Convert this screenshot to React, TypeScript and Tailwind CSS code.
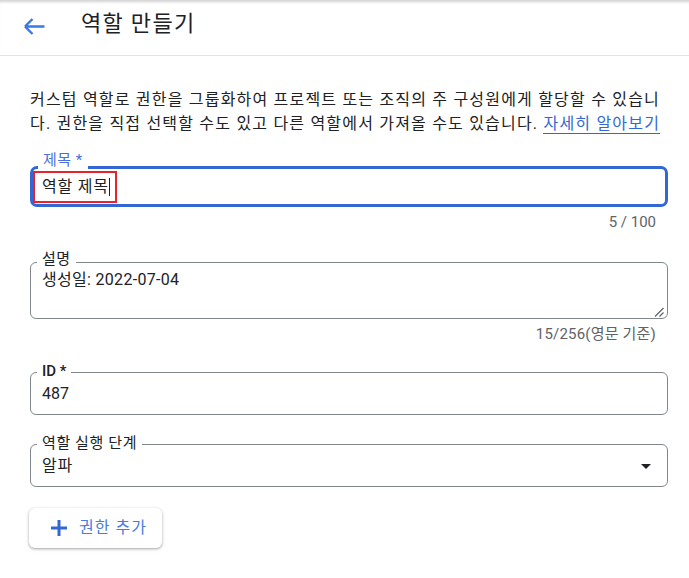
export default function App() {
  return (
    <div className="w-[689px] h-[578px] overflow-hidden bg-white text-[#202124] font-[Roboto,'Noto_Sans_CJK_KR',sans-serif]">
      <header className="h-[56px] flex items-start border-b border-[#e3e3e3] shadow-[inset_0_4px_3px_-2px_rgba(0,0,0,0.18)]">
        <svg className="ml-[22px] mt-[14px]" width="24" height="24" viewBox="0 0 24 24" fill="none" stroke="#3b78e7" strokeWidth="2.4" strokeLinecap="butt" strokeLinejoin="miter">
          <path d="M3 12.5H22.5M3 12.5L10.5 5M3 12.5L10.5 20" />
        </svg>
        <h1 className="ml-[35px] mt-[10px] text-[22px] leading-[28px] font-normal tracking-[1.3px]">역할 만들기</h1>
      </header>

      <main className="pl-[30px] pr-[21px]">
        <p className="mt-[32px] text-[16px] leading-[24px] tracking-[1.2px] whitespace-nowrap">
          커스텀 역할로 권한을 그룹화하여 프로젝트 또는 조직의 주 구성원에게 할당할 수 있습니
          <br />
          다. 권한을 직접 선택할 수도 있고 다른 역할에서 가져올 수도 있습니다.{" "}
          <a className="text-[#3367d6] border-b border-[#3367d6]">자세히 알아보기</a>
        </p>

        <div className="relative mt-[30px] h-[41px] border-[3px] border-[#3367d6] rounded-[7px] flex items-center">
          <span className="absolute left-[5px] -top-[18px] px-[5px] bg-white text-[15px] leading-[18px] tracking-[0.5px] text-[#4a6fdc]">제목 *</span>
          <div className="h-[32px] w-[84px] border-2 border-[#e8232a] flex items-center pl-[7px] text-[16px] leading-[20px] tracking-[0.8px]">
            역할 제목
            <span className="inline-block w-px h-[18px] bg-[#202124]" />
          </div>
        </div>
        <div className="mt-[6px] pr-[12px] text-right text-[15px] leading-[18px] text-[#5f6368]">5 / 100</div>

        <div className="relative mt-[31px] h-[57px] border border-[#80868b] rounded-[6px] pl-[11px] pt-[7px]">
          <span className="absolute left-[6px] -top-[13px] px-[5px] bg-white text-[15px] leading-[18px] tracking-[0.5px]">설명</span>
          <div className="text-[16px] leading-[20px] tracking-[0.3px]">생성일: 2022-07-04</div>
          <svg className="absolute right-[3px] bottom-[1px]" width="10" height="10" viewBox="0 0 10 10" stroke="#5f6368" strokeWidth="1.2">
            <path d="M9.5 1L1 9.5M9.5 5.5L5.5 9.5" />
          </svg>
        </div>
        <div className="mt-[6px] pr-[12px] text-right text-[15px] leading-[18px] text-[#5f6368] tracking-[0.2px]">15/256(영문 기준)</div>

        <div className="relative mt-[29px] h-[43px] border border-[#80868b] rounded-[6px] pl-[11px] flex items-center">
          <span className="absolute left-[6px] -top-[11px] px-[5px] bg-white text-[15px] leading-[18px] font-medium">ID *</span>
          <div className="text-[16px] leading-[20px]">487</div>
        </div>

        <div className="relative mt-[29px] h-[43px] border border-[#80868b] rounded-[6px] pl-[11px] pr-[9px] flex items-center justify-between">
          <span className="absolute left-[6px] -top-[11px] px-[5px] bg-white text-[15px] leading-[18px] tracking-[0.6px]">역할 실행 단계</span>
          <div className="text-[16px] leading-[20px] tracking-[0.8px]">알파</div>
          <svg width="24" height="24" viewBox="0 0 24 24" fill="#202124">
            <path d="M7 10l5 5 5-5z" />
          </svg>
        </div>

        <button className="-ml-px mt-[21px] w-[133px] h-[40px] rounded-[6px] bg-white flex items-center pl-[21px] shadow-[0_1px_2px_rgba(60,64,67,0.3),0_1px_3px_1px_rgba(60,64,67,0.15)]">
          <svg width="18" height="18" viewBox="0 0 18 18" stroke="#3367d6" strokeWidth="3" fill="none">
            <path d="M9 1V17M1 9H17" />
          </svg>
          <span className="ml-[11px] text-[16px] leading-[20px] tracking-[1px] text-[#4a7be0]">권한 추가</span>
        </button>
      </main>
    </div>
  );
}
